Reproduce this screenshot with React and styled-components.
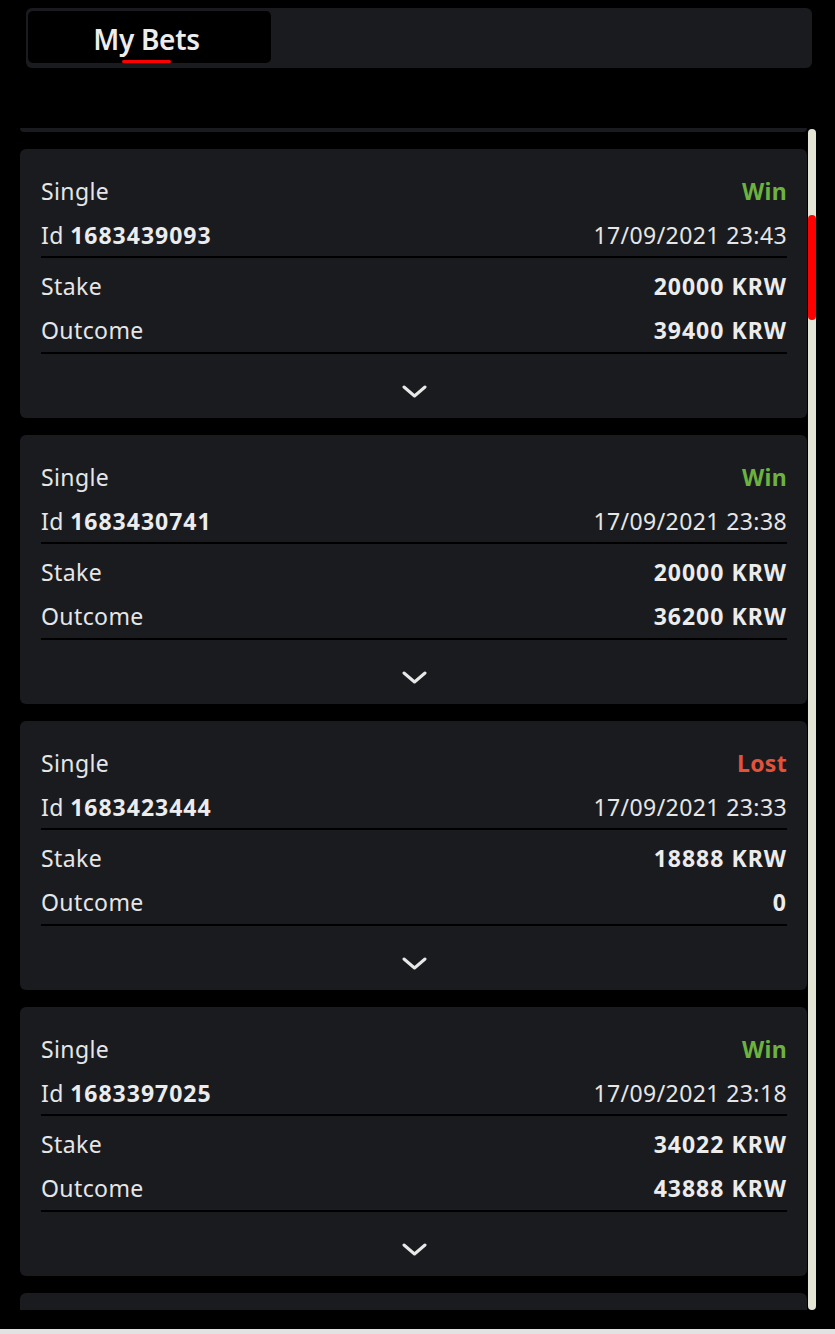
import React from "react";
import styled, { createGlobalStyle } from "styled-components";

const GlobalStyle = createGlobalStyle`
  html, body { margin: 0; padding: 0; background: #000; }
  body { font-family: "Noto Sans", "Open Sans", sans-serif; color: #e6e6e6; }
  * { box-sizing: border-box; }
`;

const Page = styled.div`
  width: 835px;
  height: 1334px;
  display: flex;
  flex-direction: column;
  background: #000;
  overflow: hidden;
`;

const TabBar = styled.div`
  margin: 8px 23px 0 26px;
  height: 60px;
  padding: 3px 2px 5px;
  background: #1a1b1f;
  border-radius: 6px;
  display: flex;
`;

const Tab = styled.div`
  width: 243px;
  background: #000;
  border-radius: 5px;
  display: flex;
  flex-direction: column;
  align-items: center;
  padding-top: 11px;
  padding-right: 6px;
`;

const TabLabel = styled.span`
  font-size: 28px;
  line-height: 34px;
  font-weight: 600;
  color: #ededed;
  letter-spacing: -0.3px;
`;

const TabUnderline = styled.span`
  margin-top: 4px;
  width: 49px;
  height: 3px;
  border-radius: 2px;
  background: #ff0000;
`;

const Viewport = styled.div`
  margin: 60px 19px 0 20px;
  height: 1182px;
  display: flex;
  gap: 1px;
  overflow: hidden;
`;

const List = styled.div`
  flex: 1;
  display: flex;
  flex-direction: column;
  gap: 17px;
  overflow: hidden;
`;

const CardEdge = styled.div`
  flex: ${(p) => (p.$fill ? "1" : "0 0 auto")};
  height: ${(p) => (p.$fill ? "auto" : "4px")};
  background: #1a1b1f;
  border-radius: ${(p) => (p.$fill ? "6px 6px 0 0" : "0 0 6px 6px")};
`;

const Card = styled.div`
  background: #1a1b1f;
  border-radius: 6px;
  padding: 26px 20px 0 21px;
  display: flex;
  flex-direction: column;
  flex-shrink: 0;
`;

const Section = styled.div`
  display: flex;
  flex-direction: column;
  gap: 12px;
  padding: ${(p) => p.$top}px 0 ${(p) => p.$bottom}px;
  border-bottom: 2px solid #000;
`;

const Row = styled.div`
  display: flex;
  justify-content: space-between;
  align-items: center;
  height: 32px;
  font-size: 23px;
  line-height: 32px;
  white-space: nowrap;
`;

const Label = styled.span`
  color: #e6e6e6;
  font-weight: 400;
  letter-spacing: 0.4px;
`;

const Strong = styled.b`
  font-weight: 700;
  color: #ececec;
  letter-spacing: 1px;
`;

const Status = styled.span`
  font-weight: 700;
  letter-spacing: 0.3px;
  color: ${(p) => (p.$win ? "#6cb23f" : "#e3523b")};
`;

const Footer = styled.div`
  height: 64px;
  display: flex;
  justify-content: center;
  padding-top: 31px;
`;

const Track = styled.div`
  flex: 0 0 8px;
  width: 8px;
  margin-top: 1px;
  background: #e5e5d5;
  border-radius: 4px;
  display: flex;
  flex-direction: column;
`;

const Thumb = styled.div`
  width: 8px;
  height: ${(p) => p.$size}px;
  margin-top: ${(p) => p.$offset}px;
  background: #ff0000;
  border-radius: 4px;
`;

const BottomStrip = styled.div`
  margin-top: 19px;
  height: 5px;
  background: #e2e2e2;
`;

const Chevron = () => (
  <svg width="25" height="13" viewBox="0 0 25 13" fill="none">
    <polyline points="2,2 12.5,11 23,2" stroke="#e8e8e8" strokeWidth="3" strokeLinecap="round" strokeLinejoin="round" />
  </svg>
);

const bets = [
  { id: "1683439093", date: "17/09/2021 23:43", stake: "20000 KRW", outcome: "39400 KRW", win: true },
  { id: "1683430741", date: "17/09/2021 23:38", stake: "20000 KRW", outcome: "36200 KRW", win: true },
  { id: "1683423444", date: "17/09/2021 23:33", stake: "18888 KRW", outcome: "0", win: false },
  { id: "1683397025", date: "17/09/2021 23:18", stake: "34022 KRW", outcome: "43888 KRW", win: true },
];

const BetCard = ({ bet }) => (
  <Card>
    <Section $top={0} $bottom={5}>
      <Row>
        <Label>Single</Label>
        <Status $win={bet.win}>{bet.win ? "Win" : "Lost"}</Status>
      </Row>
      <Row>
        <Label>
          Id <Strong>{bet.id}</Strong>
        </Label>
        <Label>{bet.date}</Label>
      </Row>
    </Section>
    <Section $top={12} $bottom={6}>
      <Row>
        <Label>Stake</Label>
        <Strong>{bet.stake}</Strong>
      </Row>
      <Row>
        <Label>Outcome</Label>
        <Strong>{bet.outcome}</Strong>
      </Row>
    </Section>
    <Footer>
      <Chevron />
    </Footer>
  </Card>
);

export default function App() {
  return (
    <>
      <GlobalStyle />
      <Page>
        <TabBar>
          <Tab>
            <TabLabel>My Bets</TabLabel>
            <TabUnderline />
          </Tab>
        </TabBar>
        <Viewport>
          <List>
            <CardEdge />
            {bets.map((bet) => (
              <BetCard key={bet.id} bet={bet} />
            ))}
            <CardEdge $fill />
          </List>
          <Track>
            <Thumb $offset={86} $size={105} />
          </Track>
        </Viewport>
        <BottomStrip />
      </Page>
    </>
  );
}
